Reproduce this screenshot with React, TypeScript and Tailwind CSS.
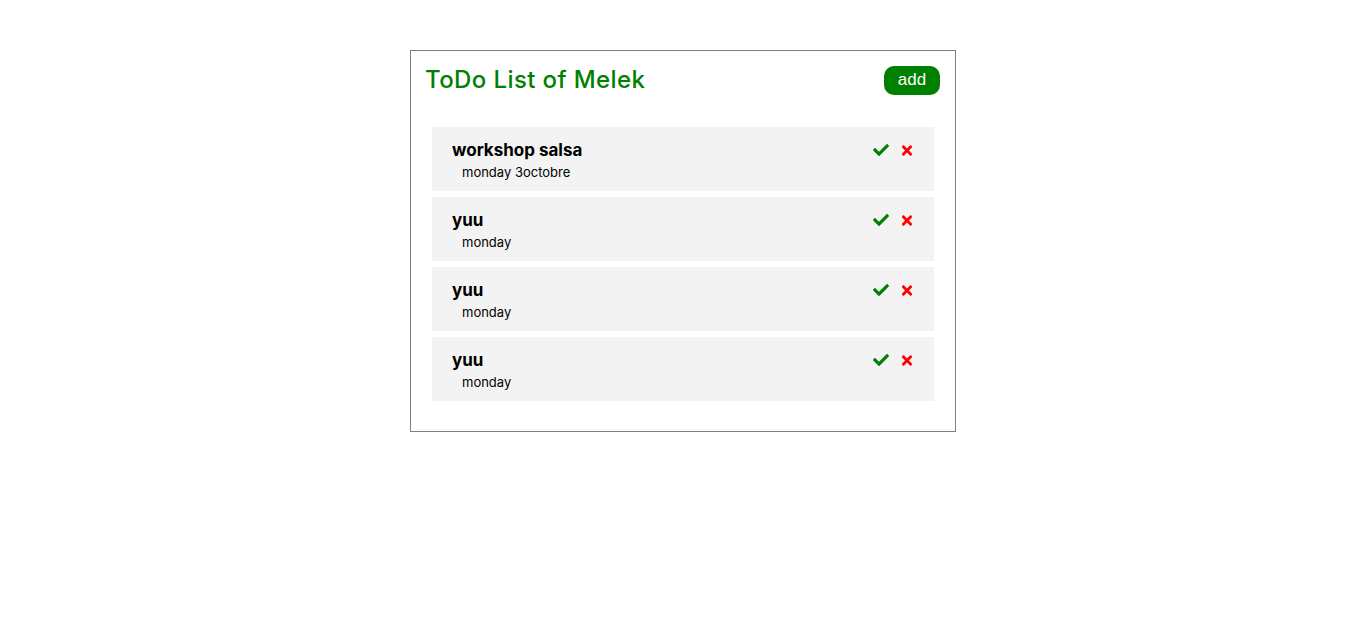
import { FaCheck, FaTimes } from 'react-icons/fa';

const todos = [
  { title: 'workshop salsa', date: 'monday 3octobre' },
  { title: 'yuu', date: 'monday' },
  { title: 'yuu', date: 'monday' },
  { title: 'yuu', date: 'monday' },
];

export default function App() {
  return (
    <div className="min-h-screen bg-white pt-[50px] font-['Inter',sans-serif]">
      <div className="mx-auto w-[546px] border border-[#808080] bg-white">
        {/* Header */}
        <div className="flex items-center justify-between pl-[14px] pr-[15px] pt-[13px]">
          <h1 className="text-[24px] font-medium leading-[32px] tracking-[0.4px] text-[#008000]">ToDo List of Melek</h1>
          <button className="h-[29px] w-[56px] rounded-[10px] bg-[#008000] font-['Liberation_Sans',sans-serif] text-[17px] text-white">
            add
          </button>
        </div>

        {/* Items */}
        <div className="flex flex-col gap-[6px] px-[21px] pb-[30px] pt-[31px]">
          {todos.map((t, i) => (
            <div key={i} className="flex h-[64px] items-start justify-between bg-[#f3f3f3] pl-[20px] pr-[21px]">
              <div className="pt-[12px]">
                <p className="text-[17px] font-bold leading-[22px] text-black">{t.title}</p>
                <p className="pl-[10px] text-[13px] leading-[22px] text-black">{t.date}</p>
              </div>
              <div className="flex items-center gap-[12px] pt-[15px]">
                <FaCheck className="h-[16px] w-[16px] text-[#008000]" />
                <FaTimes className="h-[15px] w-[12px] text-[#ff0000]" />
              </div>
            </div>
          ))}
        </div>
      </div>
    </div>
  );
}
